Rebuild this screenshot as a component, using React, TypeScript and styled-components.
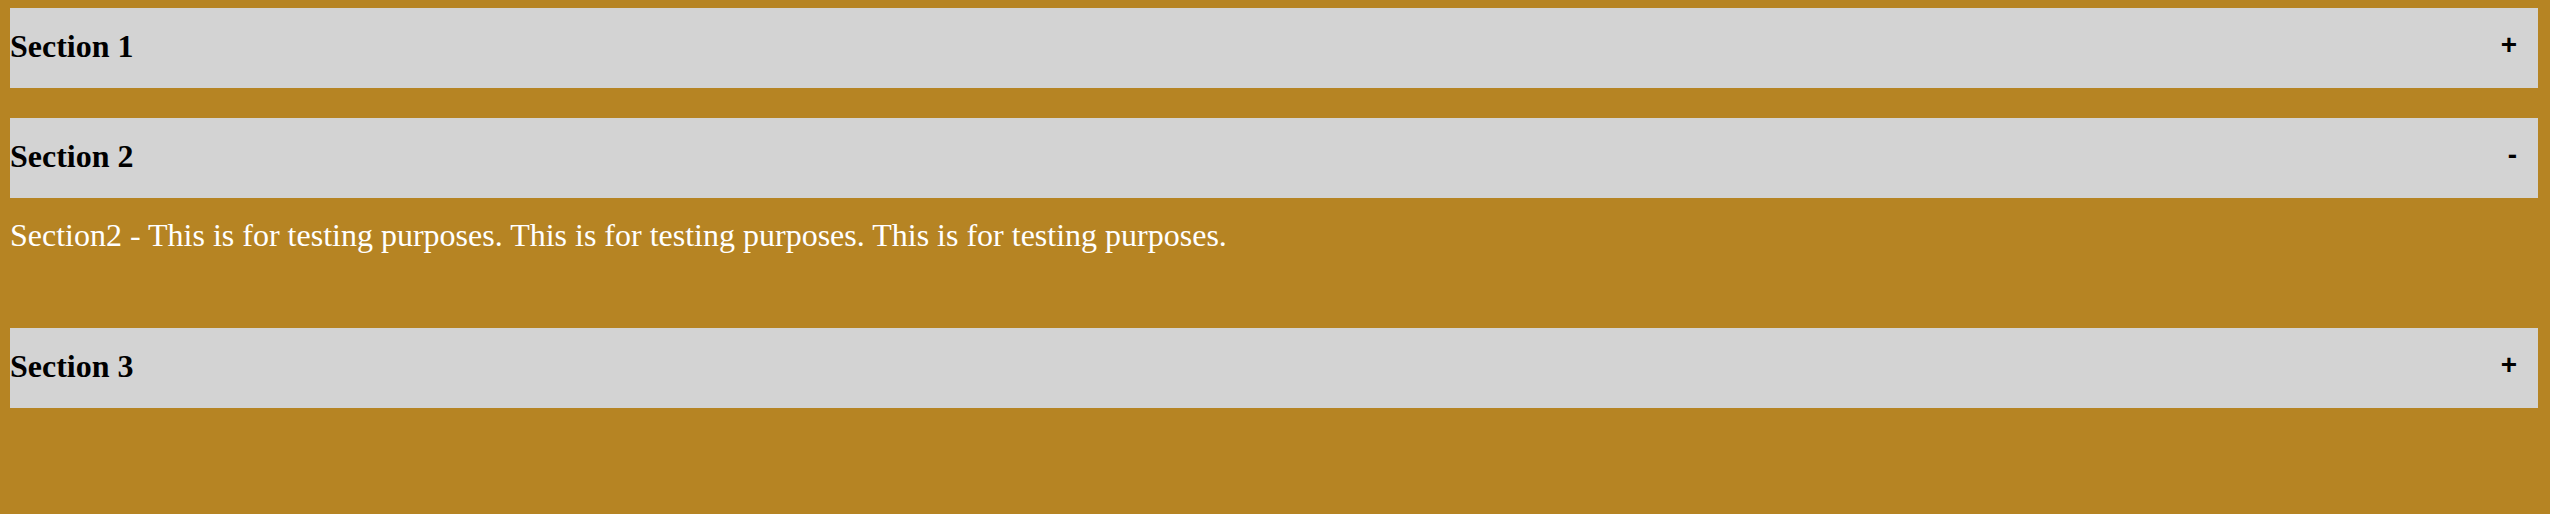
import React, { useState } from "react";
import styled, { createGlobalStyle } from "styled-components";

const GlobalStyle = createGlobalStyle`
  html, body {
    margin: 0;
    padding: 0;
    background: #b68423;
  }
  body {
    padding: 8px 12px 8px 10px;
    font-family: "Liberation Serif", "Times New Roman", serif;
  }
`;

const Accordion = styled.div`
  display: flex;
  flex-direction: column;
  gap: 30px;
`;

const Section = styled.section`
  display: flex;
  flex-direction: column;
`;

const Header = styled.div`
  display: flex;
  justify-content: space-between;
  align-items: flex-start;
  box-sizing: border-box;
  height: 80px;
  padding: 20px 21px 24px 0;
  background: #d3d3d3;
  cursor: pointer;
`;

const Title = styled.h3`
  margin: 0;
  font-family: "Liberation Serif", "Times New Roman", serif;
  font-size: 32px;
  font-weight: bold;
  line-height: 36px;
  color: #000;
`;

const Toggle = styled.span`
  margin-top: 3px;
  font-family: "Liberation Sans", Arial, sans-serif;
  font-size: 28px;
  font-weight: bold;
  line-height: 28px;
  color: #000;
`;

const Content = styled.div`
  box-sizing: border-box;
  height: 100px;
  padding: 19px 0 45px;
  font-family: "Liberation Serif", "Times New Roman", serif;
  font-size: 32px;
  line-height: 36px;
  color: #fff;
`;

const sections = [
  { title: "Section 1", body: "Section1 - This is for testing purposes. This is for testing purposes. This is for testing purposes." },
  { title: "Section 2", body: "Section2 - This is for testing purposes. This is for testing purposes. This is for testing purposes." },
  { title: "Section 3", body: "Section3 - This is for testing purposes. This is for testing purposes. This is for testing purposes." },
];

export default function App() {
  const [open, setOpen] = useState<number | null>(1);
  return (
    <>
      <GlobalStyle />
      <Accordion>
        {sections.map((s, i) => (
          <Section key={s.title}>
            <Header onClick={() => setOpen(open === i ? null : i)}>
              <Title>{s.title}</Title>
              <Toggle>{open === i ? "-" : "+"}</Toggle>
            </Header>
            {open === i && <Content>{s.body}</Content>}
          </Section>
        ))}
      </Accordion>
    </>
  );
}
